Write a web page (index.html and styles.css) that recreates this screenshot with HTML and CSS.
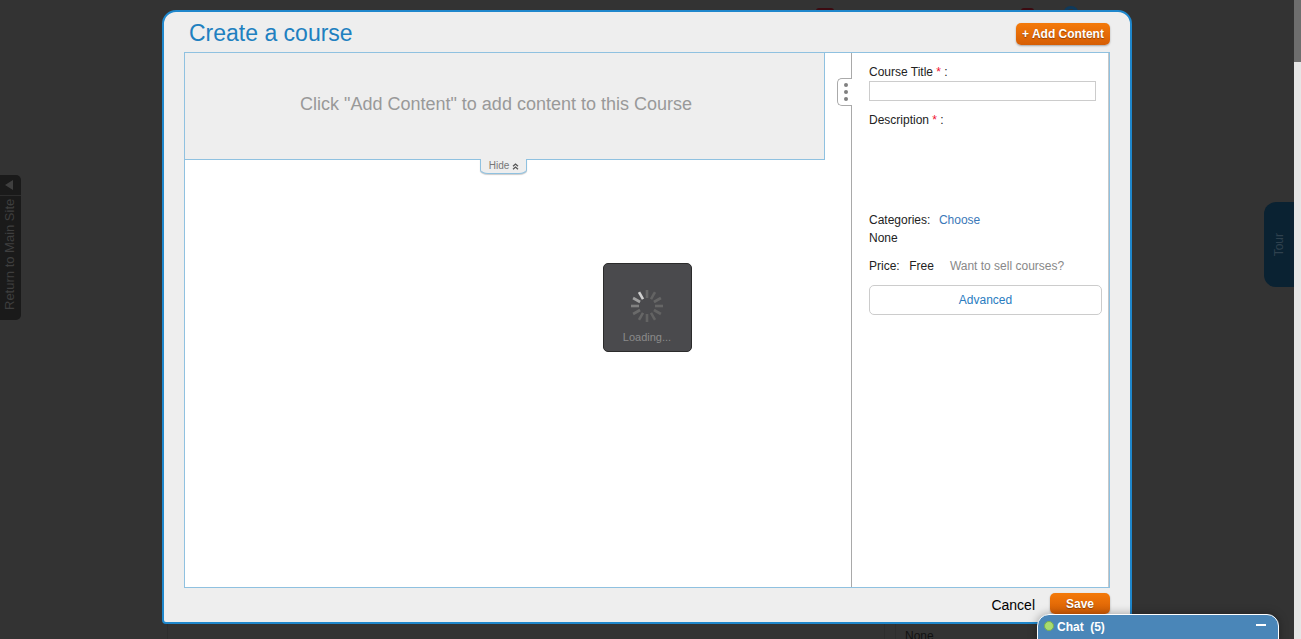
FILE: index.html
```html
<!DOCTYPE html>
<html lang="en">
<head>
<meta charset="utf-8">
<title>Create a course</title>
<link rel="stylesheet" href="styles.css">
</head>
<body>
<div class="page">
  <div class="under-top">
    <span class="mark mark-red"></span>
    <span class="mark mark-red mark-small"></span>
    <span class="mark-round"></span>
  </div>
  <div class="under-bottom">
    <span class="under-line under-line-a"></span>
    <span class="under-cell"></span>
    <span class="under-none">None</span>
  </div>

  <a class="return-tab">
    <span class="return-head"><span class="return-arrow"></span></span>
    <span class="return-text">Return to Main Site</span>
  </a>
  <div class="tour-tab"><span class="tour-text">Tour</span></div>
  <div class="scrollbar"><div class="scroll-thumb"></div></div>

  <section class="modal">
    <header class="modal-head">
      <h1 class="modal-title">Create a course</h1>
      <button class="btn btn-add">+ Add Content</button>
    </header>
    <div class="frame">
      <div class="stage">
        <div class="stage-top">
          <div class="placeholder">Click "Add Content" to add content to this Course</div>
          <div class="hide-tab">Hide
            <svg class="hide-icon" width="7" height="7" viewBox="0 0 7 7"><path d="M1 3.2 3.5 1 6 3.2M1 6.2 3.5 4 6 6.2" fill="none" stroke="#555" stroke-width="1.3"/></svg>
          </div>
        </div>
        <div class="handle"><i></i><i></i><i></i></div>
        <div class="loader">
          <svg class="spinner" width="36" height="36" viewBox="0 0 36 36">
            <g stroke-width="2.6" stroke-linecap="butt">
              <line x1="18" y1="2" x2="18" y2="10" stroke="#666" />
              <line x1="26" y1="4.1" x2="22" y2="11.1" stroke="#636363" />
              <line x1="31.9" y1="10" x2="24.9" y2="14" stroke="#666" />
              <line x1="34" y1="18" x2="26" y2="18" stroke="#666" />
              <line x1="31.9" y1="26" x2="24.9" y2="22" stroke="#636363" />
              <line x1="26" y1="31.9" x2="22" y2="24.9" stroke="#636363" />
              <line x1="18" y1="34" x2="18" y2="26" stroke="#636363" />
              <line x1="10" y1="31.9" x2="14" y2="24.9" stroke="#666" />
              <line x1="4.1" y1="26" x2="11.1" y2="22" stroke="#6a6a6a" />
              <line x1="2" y1="18" x2="10" y2="18" stroke="#808080" />
              <line x1="4.1" y1="10" x2="11.1" y2="14" stroke="#a0a0a0" />
              <line x1="10" y1="4.1" x2="14" y2="11.1" stroke="#d0d0d0" />
            </g>
          </svg>
          <div class="loader-text">Loading...</div>
        </div>
      </div>
      <aside class="side">
        <div class="field-label field-first">Course Title <span class="req">*</span> :</div>
        <div class="text-input"></div>
        <div class="field-label field-desc">Description <span class="req">*</span> :</div>
        <div class="cat-row"><span>Categories:</span><a class="link">Choose</a></div>
        <div class="none-row">None</div>
        <div class="price-row"><span>Price:</span><span>Free</span><a class="muted">Want to sell courses?</a></div>
        <div class="advanced">Advanced</div>
      </aside>
    </div>
    <footer class="modal-foot">
      <span class="cancel">Cancel</span>
      <button class="btn btn-save">Save</button>
    </footer>
  </section>

  <div class="chat">
    <span class="chat-dot"></span>
    <span class="chat-name">Chat</span>
    <span class="chat-count">(5)</span>
    <span class="chat-min"></span>
  </div>
</div>
</body>
</html>
```
FILE: styles.css
```css
* { box-sizing: border-box; }
html, body { margin: 0; height: 100%; overflow: hidden; }
body { background: #333; font-family: "Liberation Sans", Arial, sans-serif; color: #222; font-size: 12px; }
.page { position: relative; width: 1301px; height: 639px; overflow: hidden; background: #333; }

.under-top { display: flex; align-items: flex-start; padding: 8px 0 0 816px; }
.mark { display: block; height: 4px; border-radius: 3px 3px 0 0; }
.mark-red { width: 18px; background: #3c0a10; }
.mark-small { width: 13px; margin-left: 187px; }
.mark-round { display: block; width: 16px; height: 16px; margin: -2px 0 0 29px; border-radius: 50%; background: #333; border: 3px solid #0e3a5c; }

.under-bottom { position: absolute; left: 0; right: 0; top: 624px; height: 15px; }
.under-line { position: absolute; top: 0; bottom: 0; width: 1px; background: #2e2e2e; }
.under-line-a { left: 167px; }
.under-cell { position: absolute; left: 884px; top: 0; bottom: 0; width: 12px; border-left: 1px solid #2e2e2e; border-right: 1px solid #2e2e2e; }
.under-none { position: absolute; left: 905px; top: 5px; font-size: 12px; line-height: 14px; color: #111; }

.return-tab { position: absolute; left: 0; top: 175px; width: 21px; height: 145px; background: #1a1a1a; border-radius: 0 5px 5px 0; display: flex; flex-direction: column; }
.return-head { height: 21px; flex: none; border-bottom: 1px solid #2d2d2d; display: flex; align-items: center; justify-content: center; padding-right: 3px; }
.return-arrow { display: block; width: 0; height: 0; border-style: solid; border-width: 5px 8px 5px 0; border-color: transparent #3f3f3f transparent transparent; }
.return-text { flex: 1; padding-top: 10px; display: block; writing-mode: vertical-rl; transform: rotate(180deg); font-size: 13px; line-height: 20px; color: #3e3e3e; white-space: nowrap; }

.tour-tab { position: absolute; left: 1264px; top: 202px; width: 30px; height: 85px; background: #0a2232; border-radius: 12px 0 0 12px; display: flex; align-items: center; justify-content: center; padding-right: 1px; }
.tour-text { writing-mode: vertical-rl; transform: rotate(180deg); font-size: 12px; color: #2f414e; }

.scrollbar { position: absolute; left: 1294px; top: 0; width: 7px; height: 639px; background: #e6e6e6; }
.scroll-thumb { height: 62px; background: #6e6e6e; }

.modal { position: absolute; left: 162px; top: 10px; width: 970px; height: 614px; background: #eee; border: 2px solid #1f87cc; border-radius: 14px 14px 4px 4px; padding: 0 20px; display: flex; flex-direction: column; }
.modal-head { height: 40px; display: flex; justify-content: space-between; align-items: flex-start; padding: 11px 0 0 5px; flex: none; }
.modal-title { margin: -5px 0 0; font-size: 23px; line-height: 30px; font-weight: 400; color: #2080c0; }

.btn { border: 0; padding: 0; color: #fff; font: bold 12px "Liberation Sans", Arial, sans-serif; border-radius: 5px; text-shadow: 0 1px 1px rgba(90, 40, 0, .6); background: linear-gradient(#f47a0a, #d65e05); box-shadow: 0 1px 2px rgba(0, 0, 0, .3); }
.btn-add { width: 94px; height: 22px; }
.btn-save { width: 60px; height: 21px; }

.frame { flex: none; width: 926px; height: 536px; border: 1px solid #8fc1e0; background: #fff; display: flex; }
.stage { position: relative; width: 667px; border-right: 1px solid #a9a9a9; flex: none; }
.stage-top { position: relative; width: 640px; height: 107px; background: #eee; border-right: 1px solid #8fc1e0; border-bottom: 1px solid #8fc1e0; }
.placeholder { padding-right: 17px; padding-top: 40px; text-align: center; font-size: 18px; line-height: 22px; color: #999; }
.hide-tab { position: absolute; left: 295px; top: 106px; width: 47px; height: 15px; padding: 1px 0 0 1px; background: #eee; border: 1px solid #8fc1e0; border-top: 0; border-radius: 0 0 8px 8px / 0 0 4px 4px; box-shadow: 0 1px 1px rgba(0, 0, 0, .2); text-align: center; font-size: 10px; line-height: 12px; color: #777; }
.hide-icon { vertical-align: -1px; }

.handle { position: absolute; right: -1px; top: 25px; width: 15px; height: 28px; padding-left: 2px; background: #fff; border: 1px solid #aaa; border-right: 0; border-radius: 5px 0 0 5px; display: flex; flex-direction: column; align-items: center; justify-content: center; gap: 3px; }
.handle i { display: block; width: 4px; height: 4px; border-radius: 50%; background: #808080; }

.loader { position: absolute; left: 418px; top: 210px; width: 89px; height: 89px; background: #4a4a4d; border: 1px solid #2b2b2b; border-radius: 5px; text-align: center; padding: 24px 1px 0 0; }
.spinner { display: block; margin: 0 auto; }
.loader-text { margin-top: 6px; font-size: 11px; line-height: 14px; color: #8b8b8b; }

.side { flex: 1; min-width: 0; padding: 12px 0 0 17px; border-right: 1px solid #c8c8c8; line-height: 14px; }
.field-label { color: #222; }
.req { color: #f01030; }
.text-input { width: 227px; height: 20px; margin-top: 2px; background: #fff; border: 1px solid #ccc; }
.field-desc { margin-top: 12px; }
.cat-row { margin-top: 86px; display: flex; gap: 8.5px; }
.link { color: #3a78b8; }
.none-row { margin-top: 4px; }
.price-row { margin-top: 14px; display: flex; }
.price-row span:nth-child(2) { margin-left: 9.5px; }
.muted { margin-left: 16px; color: #888; }
.advanced { width: 233px; height: 30px; margin-top: 12px; background: #fff; border: 1px solid #ccc; border-radius: 5px; text-align: center; line-height: 28px; color: #2a7cbf; }

.modal-foot { flex: 1; display: flex; justify-content: flex-end; align-items: flex-start; padding-top: 5px; }
.cancel { margin: 4px 15px 0 0; font-size: 14px; line-height: 16px; color: #000; }

.chat { position: absolute; left: 1037px; top: 614px; width: 242px; height: 30px; background: #4a86b8; border: 1px solid #fff; border-radius: 12px 12px 0 0; box-shadow: 0 0 10px rgba(0, 0, 0, .35); display: flex; align-items: flex-start; padding: 5px 12px 0 6px; color: #fff; font-weight: 700; font-size: 12px; line-height: 14px; }
.chat-dot { width: 10px; height: 10px; margin: 1px 3px 0 0; border-radius: 50%; background: #a8dc70; border: 1px solid #7ab050; flex: none; }
.chat-count { margin-left: 6.5px; }
.chat-min { width: 10px; height: 2px; margin: 4px 0 0 auto; background: #fff; }
```
